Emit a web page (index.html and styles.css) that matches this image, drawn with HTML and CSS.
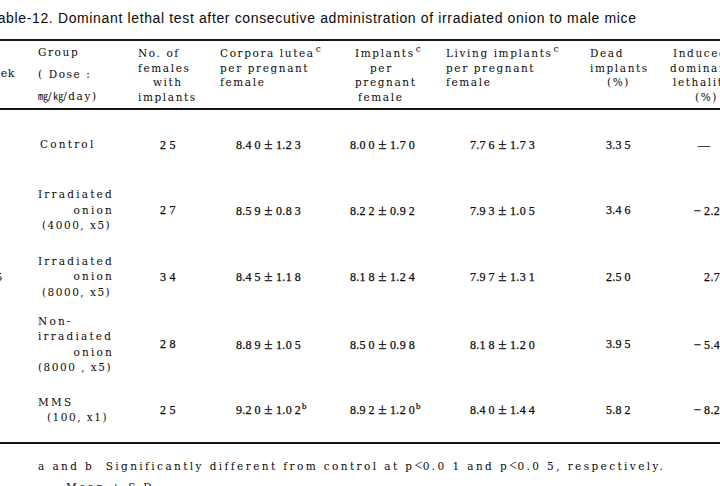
FILE: index.html
```html
<!DOCTYPE html>
<html lang="en">
<head>
<meta charset="utf-8">
<title>Table-12</title>
<link rel="stylesheet" href="styles.css">
</head>
<body>
<div class="page">
  <h1 class="title">Table-12. Dominant lethal test after consecutive administration of irradiated onion to male mice</h1>
  <table class="data">
    <colgroup>
      <col class="c-week"><col class="c-group"><col class="c-no"><col class="c-cl">
      <col class="c-imp"><col class="c-liv"><col class="c-dead"><col class="c-ind">
    </colgroup>
    <thead>
      <tr>
        <th class="h-week">Week</th>
        <th class="h-group"><span class="ln">Group</span><span class="ln">( Dose :</span><span class="ln"><span class="unit">㎎</span>/<span class="unit">㎏</span>/day)</span></th>
        <th class="h-no"><span class="ln">No. of</span><span class="ln">females</span><span class="ln in15">with</span><span class="ln">implants</span></th>
        <th class="h-cl"><span class="ln">Corpora lutea<sup>c</sup></span><span class="ln">per pregnant</span><span class="ln">female</span></th>
        <th class="h-imp"><span class="ln">Implants<sup>c</sup></span><span class="ln in15">per</span><span class="ln">pregnant</span><span class="ln in3">female</span></th>
        <th class="h-liv"><span class="ln">Living implants<sup>c</sup></span><span class="ln">per pregnant</span><span class="ln">female</span></th>
        <th class="h-dead"><span class="ln">Dead</span><span class="ln">implants</span><span class="ln in17">(%)</span></th>
        <th class="h-ind"><span class="ln">Induced</span><span class="ln out3">dominant</span><span class="ln">lethality</span><span class="ln in22">(%)</span></th>
      </tr>
    </thead>
    <tbody>
      <tr class="r1">
        <td class="week"></td>
        <td class="grp"><div class="gtext"><span class="ln in2">Control</span></div></td>
        <td class="no">2 5</td>
        <td class="cl">8.4&thinsp;0 <span class="pm">±</span> 1.2&thinsp;3</td>
        <td class="imp">8.0&thinsp;0 <span class="pm">±</span> 1.7&thinsp;0</td>
        <td class="liv">7.7&thinsp;6 <span class="pm">±</span> 1.7&thinsp;3</td>
        <td class="dead">3.3&thinsp;5</td>
        <td class="ind"><span class="dash">—</span></td>
      </tr>
      <tr class="r2">
        <td class="week"></td>
        <td class="grp"><div class="gtext"><span class="ln">Irradiated</span><span class="ln r">onion</span><span class="ln in4 par">(4000, x5)</span></div></td>
        <td class="no">2 7</td>
        <td class="cl">8.5&thinsp;9 <span class="pm">±</span> 0.8&thinsp;3</td>
        <td class="imp">8.2&thinsp;2 <span class="pm">±</span> 0.9&thinsp;2</td>
        <td class="liv">7.9&thinsp;3 <span class="pm">±</span> 1.0&thinsp;5</td>
        <td class="dead">3.4&thinsp;6</td>
        <td class="ind"><span class="mn">−</span>2.2</td>
      </tr>
      <tr class="r3">
        <td class="week">5</td>
        <td class="grp"><div class="gtext"><span class="ln">Irradiated</span><span class="ln r">onion</span><span class="ln in4 par">(8000, x5)</span></div></td>
        <td class="no">3 4</td>
        <td class="cl">8.4&thinsp;5 <span class="pm">±</span> 1.1&thinsp;8</td>
        <td class="imp">8.1&thinsp;8 <span class="pm">±</span> 1.2&thinsp;4</td>
        <td class="liv">7.9&thinsp;7 <span class="pm">±</span> 1.3&thinsp;1</td>
        <td class="dead">2.5&thinsp;0</td>
        <td class="ind">2.7</td>
      </tr>
      <tr class="r4">
        <td class="week"></td>
        <td class="grp"><div class="gtext"><span class="ln">Non-</span><span class="ln">irradiated</span><span class="ln r">onion</span><span class="ln par">(8000 , x5)</span></div></td>
        <td class="no">2 8</td>
        <td class="cl">8.8&thinsp;9 <span class="pm">±</span> 1.0&thinsp;5</td>
        <td class="imp">8.5&thinsp;0 <span class="pm">±</span> 0.9&thinsp;8</td>
        <td class="liv">8.1&thinsp;8 <span class="pm">±</span> 1.2&thinsp;0</td>
        <td class="dead">3.9&thinsp;5</td>
        <td class="ind"><span class="mn">−</span>5.4</td>
      </tr>
      <tr class="r5">
        <td class="week"></td>
        <td class="grp"><div class="gtext"><span class="ln">MMS</span><span class="ln in9 par">(100, x1)</span></div></td>
        <td class="no">2 5</td>
        <td class="cl">9.2&thinsp;0 <span class="pm">±</span> 1.0&thinsp;2<sup>b</sup></td>
        <td class="imp">8.9&thinsp;2 <span class="pm">±</span> 1.2&thinsp;0<sup>b</sup></td>
        <td class="liv">8.4&thinsp;0 <span class="pm">±</span> 1.4&thinsp;4</td>
        <td class="dead">5.8&thinsp;2</td>
        <td class="ind"><span class="mn">−</span>8.2</td>
      </tr>
    </tbody>
  </table>
  <div class="notes">
    <p class="note">a and b&nbsp;&nbsp;Significantly different from control at p<span class="lt">&lt;</span>0.0 1 and p<span class="lt">&lt;</span>0.0 5, respectively.</p>
    <p class="note mean">Mean ± S.D.</p>
  </div>
</div>
</body>
</html>
```

FILE: styles.css
```css
html, body {
  margin: 0;
  padding: 0;
  background: #ffffff;
}
body {
  width: 720px;
  height: 486px;
  overflow: hidden;
  color: #0a0a0a;
  font-family: "DejaVu Serif", "Liberation Serif", serif;
}
.page {
  width: 720px;
}
.title {
  margin: 8px 0 11px -10px;
  font-family: "Liberation Sans", "Noto Sans", sans-serif;
  font-weight: normal;
  font-size: 14px;
  letter-spacing: 0.64px;
  line-height: 20px;
  white-space: nowrap;
  color: #0a0a0a;
}
.data {
  margin-left: -36px;
  width: 796px;
  table-layout: fixed;
  border-collapse: collapse;
  font-size: 10.5px;
  letter-spacing: 1.6px;
}
.c-week { width: 70px; }
.c-group { width: 96px; }
.c-no { width: 84px; }
.c-cl { width: 130px; }
.c-imp { width: 90px; }
.c-liv { width: 146px; }
.c-dead { width: 80px; }
.c-ind { width: 100px; }

thead tr {
  border-top: 2px solid #141414;
  border-bottom: 2px solid #141414;
  height: 67px;
}
th {
  font-weight: normal;
  text-align: left;
  vertical-align: top;
  padding: 5px 0 0 0;
  line-height: 14.5px;
  white-space: nowrap;
}
.ln { display: block; }
.in2 { padding-left: 2px; }
.in3 { padding-left: 3px; }
.in4 { padding-left: 4px; }
.in9 { padding-left: 9px; }
.in15 { padding-left: 15px; }
.in17 { padding-left: 17px; }
.in22 { padding-left: 22px; }
.out3 { margin-left: -3px; }
sup {
  font-size: 9px;
  line-height: 0;
  letter-spacing: 0;
  vertical-align: 5px;
  margin-left: 1px;
}
.h-week {
  vertical-align: middle;
  text-align: center;
  padding: 0;
  font-size: 11px;
  letter-spacing: 0.5px;
}
.h-group {
  padding: 1px 0 0 4px;
  line-height: 21.5px;
}
.unit {
  font-family: "Noto Sans CJK JP", sans-serif;
  font-size: 10px;
  letter-spacing: 0;
}
.h-no { padding-left: 8px; }
.h-cl { padding-left: 6px; }
.h-imp { padding-left: 11px; }
.h-liv { padding-left: 12px; }
.h-dead { padding-left: 10px; }
.h-ind { padding-left: 13px; }

tbody td {
  vertical-align: middle;
  padding: 0;
  white-space: nowrap;
}
tbody tr.r1 { height: 69px; }
tbody tr.r2 { height: 66px; }
tbody tr.r3 { height: 67px; }
tbody tr.r4 { height: 68px; }
tbody tr.r5 {
  height: 64px;
  border-bottom: 2px solid #141414;
}
tbody tr.r1 td { padding-top: 3px; }
.week {
  text-align: center;
  font-family: "Liberation Serif", serif;
  font-size: 12px;
  letter-spacing: 0;
}
.grp { padding-left: 4px; }
.gtext {
  width: 76px;
  line-height: 15.5px;
  letter-spacing: 2.2px;
}
.gtext .r { text-align: right; }
.gtext .par { letter-spacing: 1.5px; }
.no, .cl, .imp, .liv, .dead, .ind {
  font-family: "Liberation Serif", serif;
  font-size: 12px;
  letter-spacing: 0.3px;
  -webkit-text-stroke: 0.25px #0a0a0a;
}
.pm {
  font-size: 15px;
  line-height: 1;
}
.mn {
  font-size: 13px;
  margin-right: 3px;
}
.no { padding-left: 30px; }
.cl { padding-left: 22px; }
.imp { padding-left: 6px; }
.liv { padding-left: 36px; }
.dead { padding-left: 26px; }
.ind {
  text-align: right;
  padding-right: 40px;
}
.dash {
  display: inline-block;
  margin-right: 10px;
}
.notes {
  margin-top: 11px;
}
.note {
  margin: 0;
  padding-left: 38px;
  font-size: 10.5px;
  letter-spacing: 2.4px;
  line-height: 21px;
  white-space: nowrap;
}
.lt {
  font-family: "Liberation Serif", serif;
  font-size: 14px;
  letter-spacing: 0.5px;
}
.note.mean {
  padding-left: 66px;
}
```
